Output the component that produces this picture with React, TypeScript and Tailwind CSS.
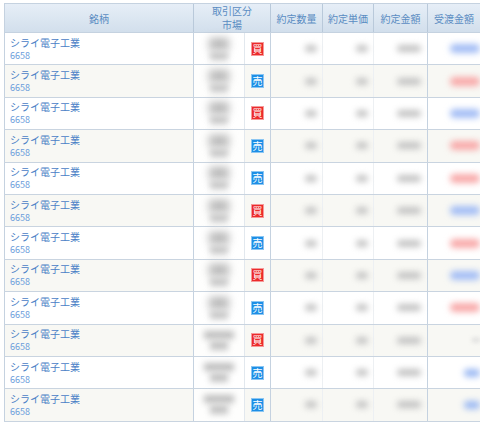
import React from "react";

type Side = "buy" | "sell";

interface Trade {
    side:     Side,
    market:   number,   // 1 = one line blob, 2 = two line blob
    settle:   "blue" | "red" | "gray" | "blueSmall",
}

const trades: Trade[] = [
    { side: "buy",  market: 1, settle: "blue" },
    { side: "sell", market: 1, settle: "red" },
    { side: "buy",  market: 1, settle: "blue" },
    { side: "sell", market: 1, settle: "red" },
    { side: "sell", market: 1, settle: "red" },
    { side: "buy",  market: 1, settle: "blue" },
    { side: "sell", market: 1, settle: "red" },
    { side: "buy",  market: 1, settle: "blue" },
    { side: "sell", market: 1, settle: "red" },
    { side: "buy",  market: 2, settle: "gray" },
    { side: "sell", market: 2, settle: "blueSmall" },
    { side: "sell", market: 2, settle: "blueSmall" },
];

function Badge(props: { side: Side }) {
    const buy = props.side === "buy";
    return (
        <span
            className={
                "flex items-center justify-center w-[13px] h-[14px] text-[10px] leading-none text-white border " +
                (buy ? "bg-[#ec2b2b] border-[#f59a9a]" : "bg-[#1d8fe6] border-[#8cc6f2]")
            }
        >
            {buy ? "買" : "売"}
        </span>
    );
}

function Settle(props: { kind: Trade["settle"] }) {
    if (props.kind === "gray") {
        return <span className="block w-[8px] h-[4px] bg-[#dcdcdc] blur-[2px]"></span>;
    }
    if (props.kind === "blueSmall") {
        return <span className="block w-[16px] h-[8px] bg-[#9ab8f3] blur-[3px] rounded-full"></span>;
    }
    return (
        <span
            className={
                "block w-[30px] h-[9px] blur-[3px] rounded-full " +
                (props.kind === "blue" ? "bg-[#a3bdf5]" : "bg-[#f8a9a9]")
            }
        ></span>
    );
}

function Blob(props: { w: string }) {
    return <span className={"block h-[7px] bg-[#c2c2c2] blur-[3px] rounded " + props.w}></span>;
}

function Row(props: { t: Trade, i: number }) {
    const t = props.t;
    const bg = props.i % 2 === 0 ? "bg-white" : "bg-[#f8f8f4]";
    return (
        <div className={"flex h-[32.4px] border-b border-[#c9d4e0] " + bg}>
            <div className="w-[190px] flex flex-col justify-center pl-[5px] pb-[1px] border-l border-[#c5d2e0] border-r border-r-[#c5d2e0]">
                <span className="text-[10px] leading-[14px] text-[#4a80c6]">シライ電子工業</span>
                <span className="text-[9px] leading-[11px] text-[#6a9ddb]">6658</span>
            </div>
            <div className="w-[50px] flex flex-col items-center justify-center gap-[2px] bg-white/80">
                {t.market === 1 ? (
                    <>
                        <span className="block w-[20px] h-[12px] bg-[#b8b8b8] blur-[4px]"></span>
                        <span className="block w-[18px] h-[8px] bg-[#c4c4c4] blur-[3px]"></span>
                    </>
                ) : (
                    <>
                        <span className="block w-[30px] h-[8px] bg-[#bdbdbd] blur-[3px]"></span>
                        <span className="block w-[18px] h-[9px] bg-[#c2c2c2] blur-[3px]"></span>
                    </>
                )}
            </div>
            <div className="w-[27px] flex items-center justify-center border-l border-[#e2e8ee] border-r border-r-[#c5d2e0]">
                <Badge side={t.side} />
            </div>
            <div className="w-[52px] flex items-center justify-end pr-[5px] border-r border-[#edf0f3]">
                <Blob w="w-[12px]" />
            </div>
            <div className="w-[51px] flex items-center justify-end pr-[5px] border-r border-[#edf0f3]">
                <Blob w="w-[12px]" />
            </div>
            <div className="w-[54px] flex items-center justify-end pr-[6px] border-r border-[#c5d2e0]">
                <Blob w="w-[24px]" />
            </div>
            <div className="flex-1 flex items-center justify-end pr-[4px]">
                <Settle kind={t.settle} />
            </div>
        </div>
    );
}

export default function App() {
    return (
        <div className="w-[480px] h-[424px] bg-white overflow-hidden pt-[3px] pl-[4px] font-['Noto_Sans_CJK_JP','Noto_Sans',sans-serif]">
            <div className="w-[480px]">
                <div className="flex h-[30px] border-t border-b border-[#c5d2e0] bg-gradient-to-b from-[#e6eef7] to-[#d2dfec] text-[10px] text-[#5a8cc2]">
                    <div className="w-[190px] flex items-center justify-center border-l border-[#c5d2e0] border-r border-r-[#b9c9da]">銘柄</div>
                    <div className="w-[77px] flex flex-col items-center justify-center leading-[14px] border-r border-[#b9c9da]">
                        <span>取引区分</span>
                        <span>市場</span>
                    </div>
                    <div className="w-[52px] flex items-center justify-center border-r border-[#b9c9da]">約定数量</div>
                    <div className="w-[51px] flex items-center justify-center border-r border-[#b9c9da]">約定単価</div>
                    <div className="w-[54px] flex items-center justify-center border-r border-[#b9c9da]">約定金額</div>
                    <div className="w-[52px] flex items-center justify-center">受渡金額</div>
                </div>
                {trades.map((t, i) => (
                    <Row key={i} t={t} i={i} />
                ))}
            </div>
        </div>
    );
}
